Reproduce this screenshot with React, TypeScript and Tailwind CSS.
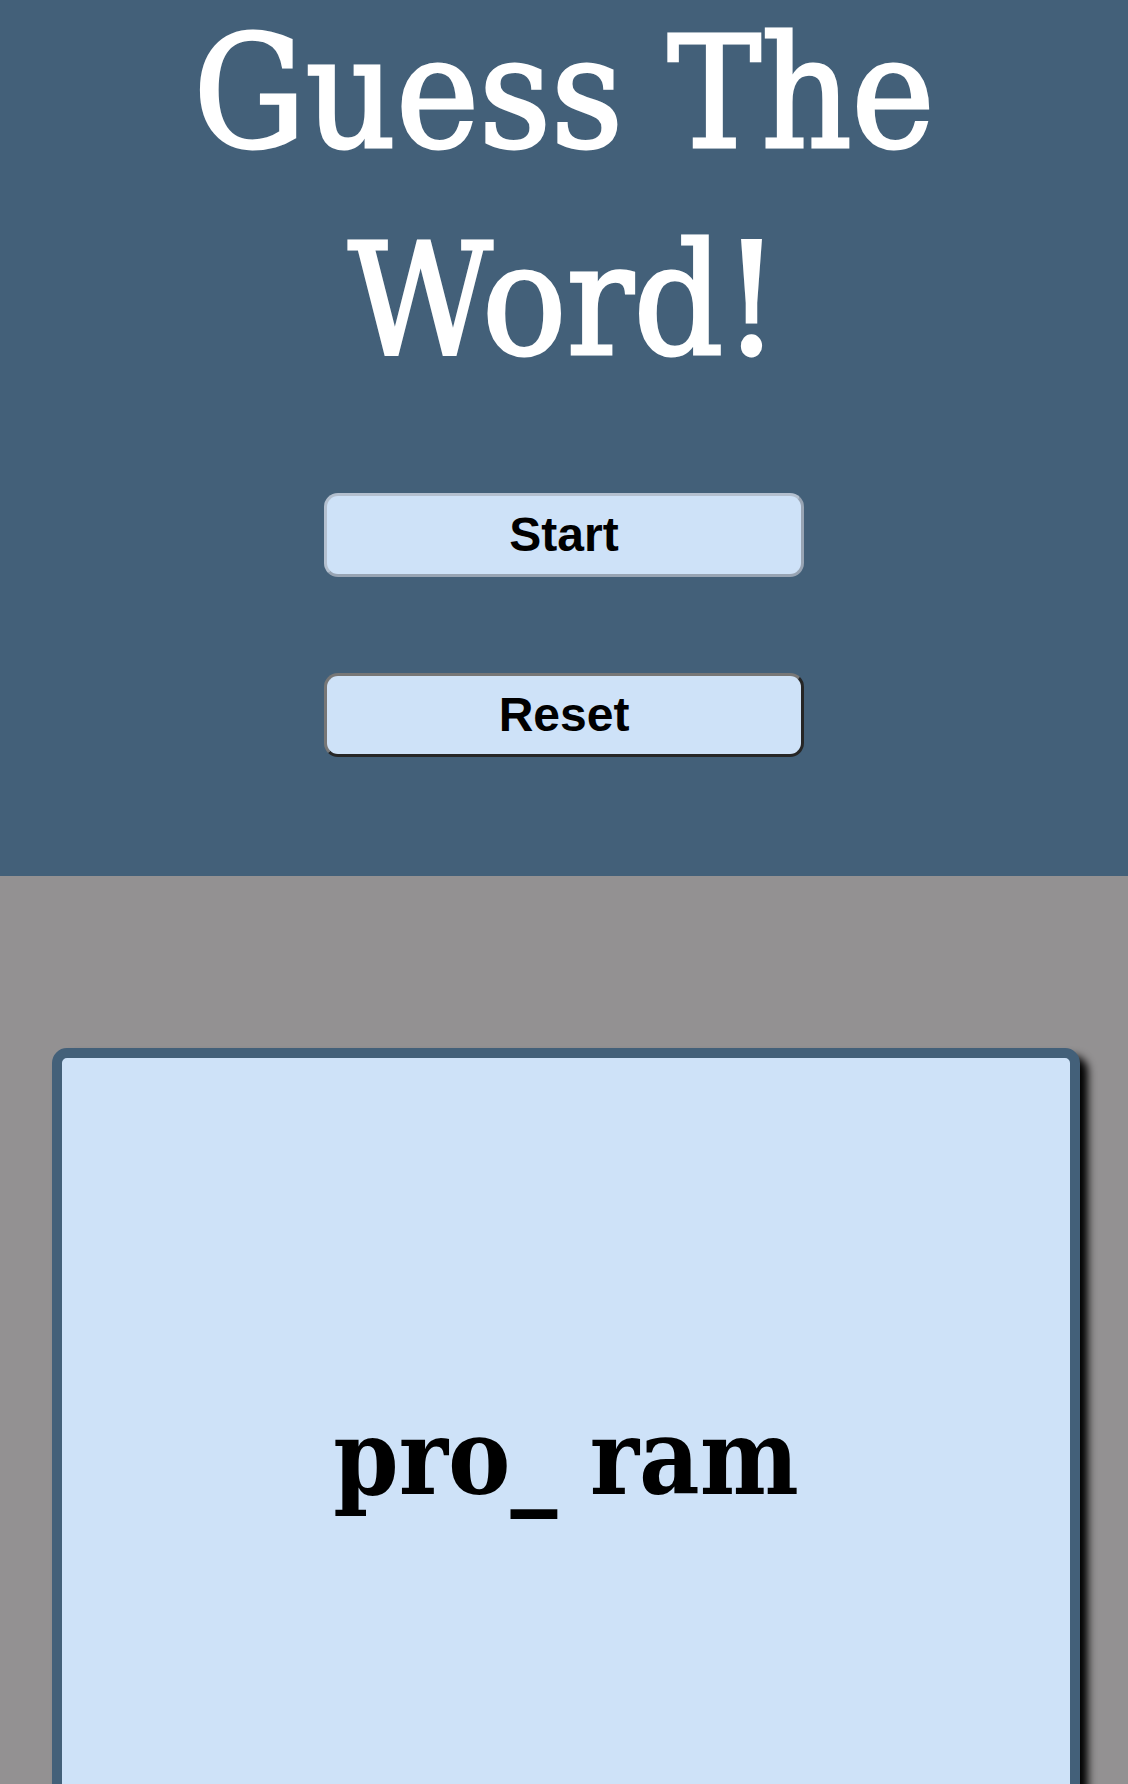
import * as React from "react";

const serif = "font-['DejaVu_Serif_Condensed','DejaVu_Serif',serif]";

export default function App() {
  const [word] = React.useState("pro_ ram");

  return (
    <div className="min-h-screen bg-[#939192]">
      <header className="flex flex-col items-center bg-[#436079] pb-[119px]">
        <h1
          className={`${serif} -mt-[10px] w-[800px] text-center text-[156px] font-normal leading-[207px] text-white [-webkit-text-stroke:3px_white]`}
        >
          Guess The Word!
        </h1>

        <div className="mt-[89px] flex flex-col items-center gap-[96px]">
          <button
            className="h-[84px] w-[480px] rounded-[14px] border-[3px] border-t-[#b4c0cf] border-l-[#b4c0cf] border-r-[#98a4b3] border-b-[#98a4b3] bg-[#cee2f8] font-['Liberation_Sans',Arial,sans-serif] text-[48px] font-bold text-black"
            type="button"
          >
            Start
          </button>
          <button
            className="h-[84px] w-[480px] rounded-[14px] border-[3px] border-t-[#777777] border-l-[#777777] border-r-[#262626] border-b-[#262626] bg-[#cee2f8] font-['Liberation_Sans',Arial,sans-serif] text-[48px] font-bold text-black"
            type="button"
          >
            Reset
          </button>
        </div>
      </header>

      <main className="pl-[52px] pr-[48px] pt-[172px] pb-[40px]">
        <div className="flex h-[820px] items-center justify-center rounded-[15px] border-[10px] border-[#436079] bg-[#cee2f8] shadow-[8px_8px_8px_black]">
          <p className={`${serif} text-[104px] font-bold text-black`}>{word}</p>
        </div>
      </main>
    </div>
  );
}
